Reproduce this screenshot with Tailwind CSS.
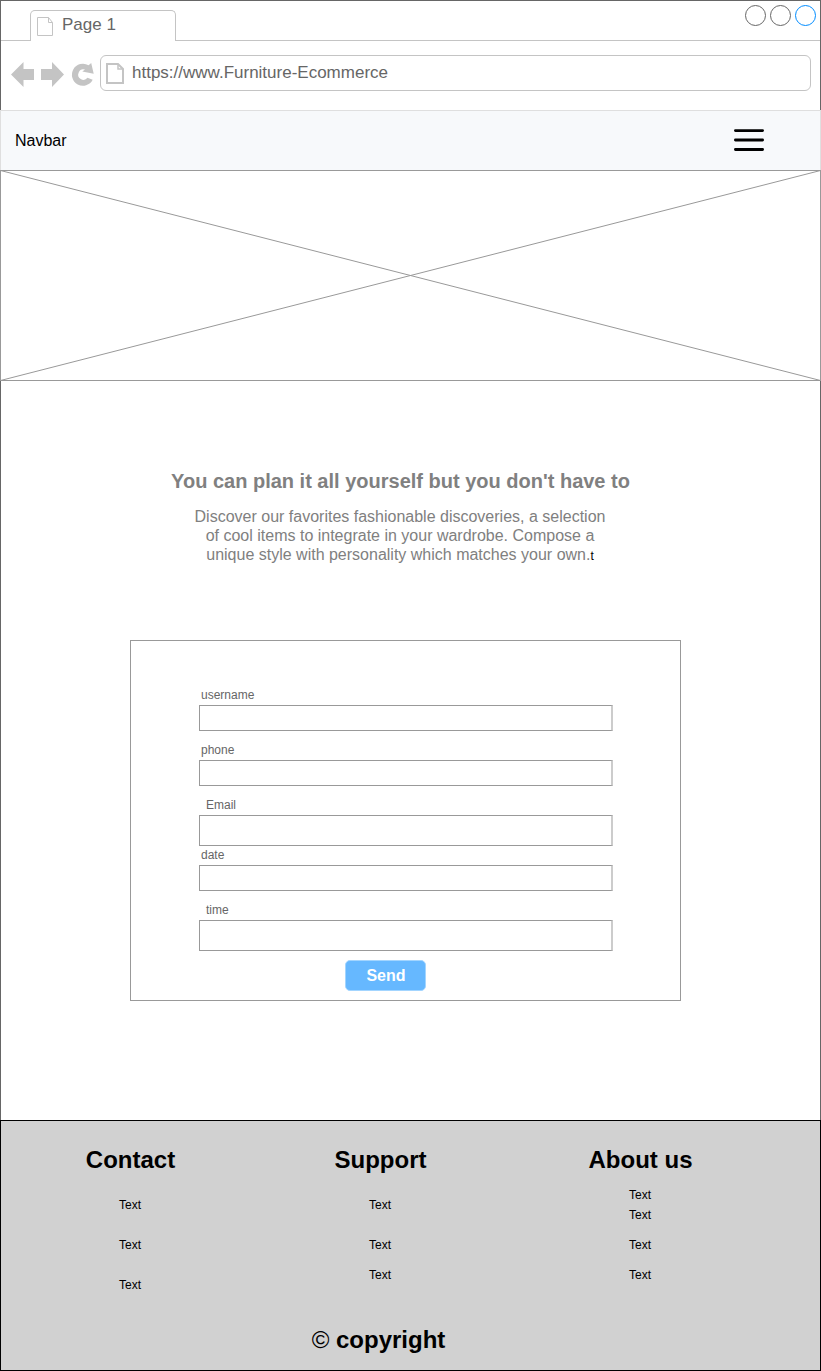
<!DOCTYPE html>
<html lang="en">
<head>
<meta charset="utf-8">
<title>Furniture-Ecommerce</title>
<script src="https://cdn.jsdelivr.net/npm/@tailwindcss/browser@4"></script>
</head>
<body class="bg-white">
<div class="w-[821px] h-[1371px] flex flex-col overflow-hidden font-['Liberation_Sans',Arial,sans-serif] text-black">
  <!-- Browser chrome -->
  <header class="h-[110px] shrink-0 border-x border-t border-[#666] flex flex-col">
    <div class="h-10 shrink-0 flex">
      <div class="w-[29px] border-b border-[#c4c4c4]"></div>
      <div class="w-[146px] mt-[9px] rounded-t-[5px] border-x border-t border-[#c4c4c4] flex items-start">
        <svg class="ml-[6px] mt-[6px] w-[17px] h-[20px] shrink-0" viewBox="0 0 17 20" fill="none" stroke="#c4c4c4"><path d="M.5 .5H11.5L15.5 5.5V18.5H.5ZM11.5 .5V5.5H15.5"/></svg>
        <span class="ml-2 mt-[4px] text-[17px] leading-[20px] text-[#666]">Page 1</span>
      </div>
      <div class="flex-1 border-b border-[#c4c4c4] flex justify-end pt-[4px] pr-[4px] gap-[4px]">
        <span class="size-[21px] rounded-full border border-[#666]"></span>
        <span class="size-[21px] rounded-full border border-[#666]"></span>
        <span class="size-[21px] rounded-full border border-[#008cff]"></span>
      </div>
    </div>
    <div class="flex pl-[9px] pt-[14px]">
      <svg class="w-[90px] h-9 shrink-0" viewBox="10 55 90 36" fill="#c4c4c4"><path d="M11 74.5 23.5 62V69H34V80H23.5V87Z"/><path d="M64 74.5 52 62V69H41V80H52V87Z"/><path d="M92.7 79.8A11 11 0 1 1 88.6 65.3L91.2 63 93.7 73.7 82.3 71.5 85 69.6A5.2 5.2 0 1 0 87.5 77.8Z"/></svg>
      <div class="w-[711px] h-9 rounded-[6px] border border-[#c4c4c4] flex items-start">
        <svg class="ml-[5px] mt-[7px] w-[18px] h-[21px] shrink-0" viewBox="0 0 18 21" fill="none" stroke="#c4c4c4" stroke-width="2"><path d="M1 1H12L17 6V20H1Z"/><path d="M12 1V6H17" stroke-width="1.5"/></svg>
        <span class="ml-[8px] mt-[7px] text-[17px] leading-[20px] text-[#666]">https://www.Furniture-Ecommerce</span>
      </div>
    </div>
  </header>

  <nav class="h-[60px] shrink-0 bg-[#f7f9fb] border-x border-t border-[#dfdfdf] flex items-center justify-between pl-[14px] pr-[56px]">
    <span class="text-[16px]">Navbar</span>
    <svg class="mb-[2px] w-[30px] h-[24px]" viewBox="0 0 30 24" fill="none" stroke="#000" stroke-width="2.8" stroke-linecap="round"><path d="M1.4 2.6H28.6M1.4 12H28.6M1.4 21.5H28.6"/></svg>
  </nav>

  <svg class="w-[821px] h-[211px] shrink-0" viewBox="0 0 821 211" fill="none" stroke="#999"><rect x=".5" y=".5" width="820" height="210"/><path d="M.5 .5 820.5 210.5M820.5 .5 .5 210.5"/></svg>

  <main class="h-[739px] shrink-0 border-x border-[#666] flex flex-col">
    <section class="w-[798px] pt-[88px] text-center text-[#808080]">
      <h1 class="pl-px text-[20px] leading-[24px] font-bold">You can plan it all yourself but you don't have to</h1>
      <p class="mt-[14px] text-[16px] leading-[19px]">Discover our favorites fashionable discoveries, a selection<br>of cool items to integrate in your wardrobe. Compose a<br>unique style with personality which matches your own.<span class="text-[12px] text-black">t</span></p>
    </section>
    <form class="mt-[74px] ml-[129px] w-[551px] h-[361px] border border-[#999] pl-[68px] pt-[46px] text-[12px] leading-[14px] text-[#666] flex flex-col">
      <label class="ml-[2px] h-[18px] pt-px">username</label>
      <input class="w-[414px] h-[26px] border border-[#999] border-r-2 border-r-[#ccc]">
      <label class="ml-[2px] mt-[11px] h-[18px] pt-px">phone</label>
      <input class="w-[414px] h-[26px] border border-[#999] border-r-2 border-r-[#ccc]">
      <label class="ml-[7px] mt-[11px] h-[18px] pt-px">Email</label>
      <input class="w-[414px] h-[31px] border border-[#999] border-r-2 border-r-[#ccc]">
      <label class="ml-[2px] mt-px h-[18px] pt-px">date</label>
      <input class="w-[414px] h-[26px] border border-[#999] border-r-2 border-r-[#ccc]">
      <label class="ml-[7px] mt-[11px] h-[18px] pt-px">time</label>
      <input class="w-[414px] h-[31px] border border-[#999] border-r-2 border-r-[#ccc]">
      <button type="button" class="ml-[146px] mt-[9px] w-[81px] h-[31px] rounded-[5px] border border-[#a3d5ff] bg-[#66b8ff] text-white text-[16px] font-bold pl-px">Send</button>
    </form>
  </main>

  <footer class="h-[251px] shrink-0 bg-[#d1d1d1] border border-black text-[12px] leading-[14px]">
    <div class="h-[178px] pt-[25px] flex text-center">
      <section class="w-[258px] flex flex-col">
        <h2 class="pl-px text-[24px] leading-[28px] font-bold">Contact</h2>
        <ul class="mt-[24px] flex flex-col gap-[26px]"><li>Text</li><li>Text</li><li>Text</li></ul>
      </section>
      <section class="w-[242px] flex flex-col">
        <h2 class="pl-px text-[24px] leading-[28px] font-bold">Support</h2>
        <ul class="mt-[24px] flex flex-col"><li>Text</li><li class="mt-[26px]">Text</li><li class="mt-[16px]">Text</li></ul>
      </section>
      <section class="w-[278px] flex flex-col">
        <h2 class="pl-px text-[24px] leading-[28px] font-bold">About us</h2>
        <ul class="mt-[14px] flex flex-col"><li>Text</li><li class="mt-[6px]">Text</li><li class="mt-[16px]">Text</li><li class="mt-[16px]">Text</li></ul>
      </section>
    </div>
    <p class="mt-[27px] w-[755px] text-center text-[24px] leading-[28px] font-bold"><span class="font-normal">©</span> copyright</p>
  </footer>
</div>
</body>
</html>
